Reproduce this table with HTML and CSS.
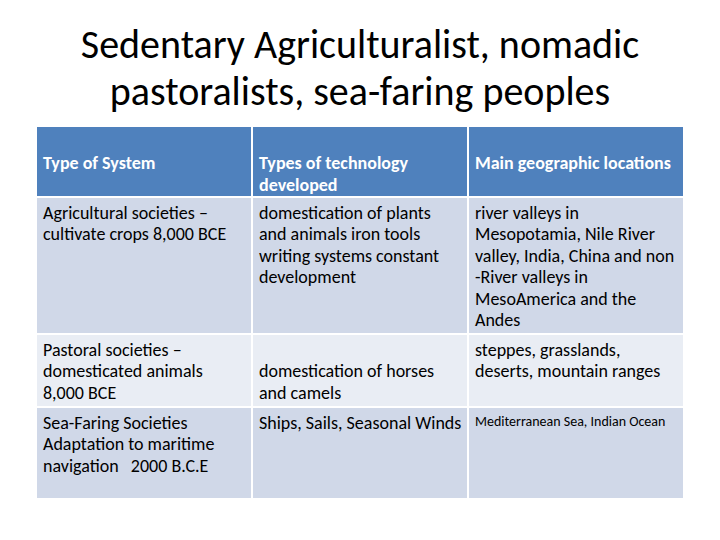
FILE: index.html
```html
<!DOCTYPE html>
<html>
<head>
<meta charset="utf-8">
<link rel="stylesheet" href="styles.css">
</head>
<body>
<div class="slide">
  <h1 class="title">Sedentary Agriculturalist, nomadic<br>pastoralists, sea-faring peoples</h1>
  <div class="grid">
    <div class="cell head">Type of System</div>
    <div class="cell head">Types of technology developed</div>
    <div class="cell head">Main geographic locations</div>

    <div class="cell dark">Agricultural societies – cultivate crops 8,000 BCE</div>
    <div class="cell dark">domestication of plants and animals iron tools writing systems constant development</div>
    <div class="cell dark">river valleys in Mesopotamia, Nile River valley, India, China and non -River valleys in MesoAmerica and the Andes</div>

    <div class="cell light">Pastoral societies – domesticated animals 8,000 BCE</div>
    <div class="cell light drop">domestication of horses and camels</div>
    <div class="cell light">steppes, grasslands, deserts, mountain ranges</div>

    <div class="cell dark">Sea-Faring Societies Adaptation to maritime navigation &nbsp; 2000 B.C.E</div>
    <div class="cell dark nowrap">Ships, Sails, Seasonal Winds</div>
    <div class="cell dark small">Mediterranean Sea, Indian Ocean</div>
  </div>
</div>
</body>
</html>
```
FILE: styles.css
```css
html, body {
  margin: 0;
  padding: 0;
  background: #ffffff;
}
.slide {
  width: 720px;
  height: 540px;
  font-family: Carlito, Calibri, "Open Sans", sans-serif;
  color: #000;
}
.title {
  margin: 0;
  padding-top: 21px;
  height: 106px;
  font-size: 40px;
  line-height: 47px;
  font-weight: normal;
  text-align: center;
  color: #000;
}
.grid {
  margin-left: 37px;
  display: grid;
  grid-template-columns: 214px 214px 214px;
  grid-template-rows: 69px 135px 71px 90px;
  gap: 2px;
}
.cell {
  box-sizing: border-box;
  padding: 4.5px 6px 0 6px;
  font-size: 18px;
  line-height: 21.6px;
}
.head {
  background: #4f81bd;
  color: #fff;
  font-weight: bold;
  padding-top: 26px;
}
.dark {
  background: #d0d8e8;
}
.light {
  background: #e9edf4;
}
.drop {
  padding-top: 26px;
}
.nowrap {
  white-space: nowrap;
}
.small {
  font-size: 14px;
  padding-top: 2.5px;
}
```
